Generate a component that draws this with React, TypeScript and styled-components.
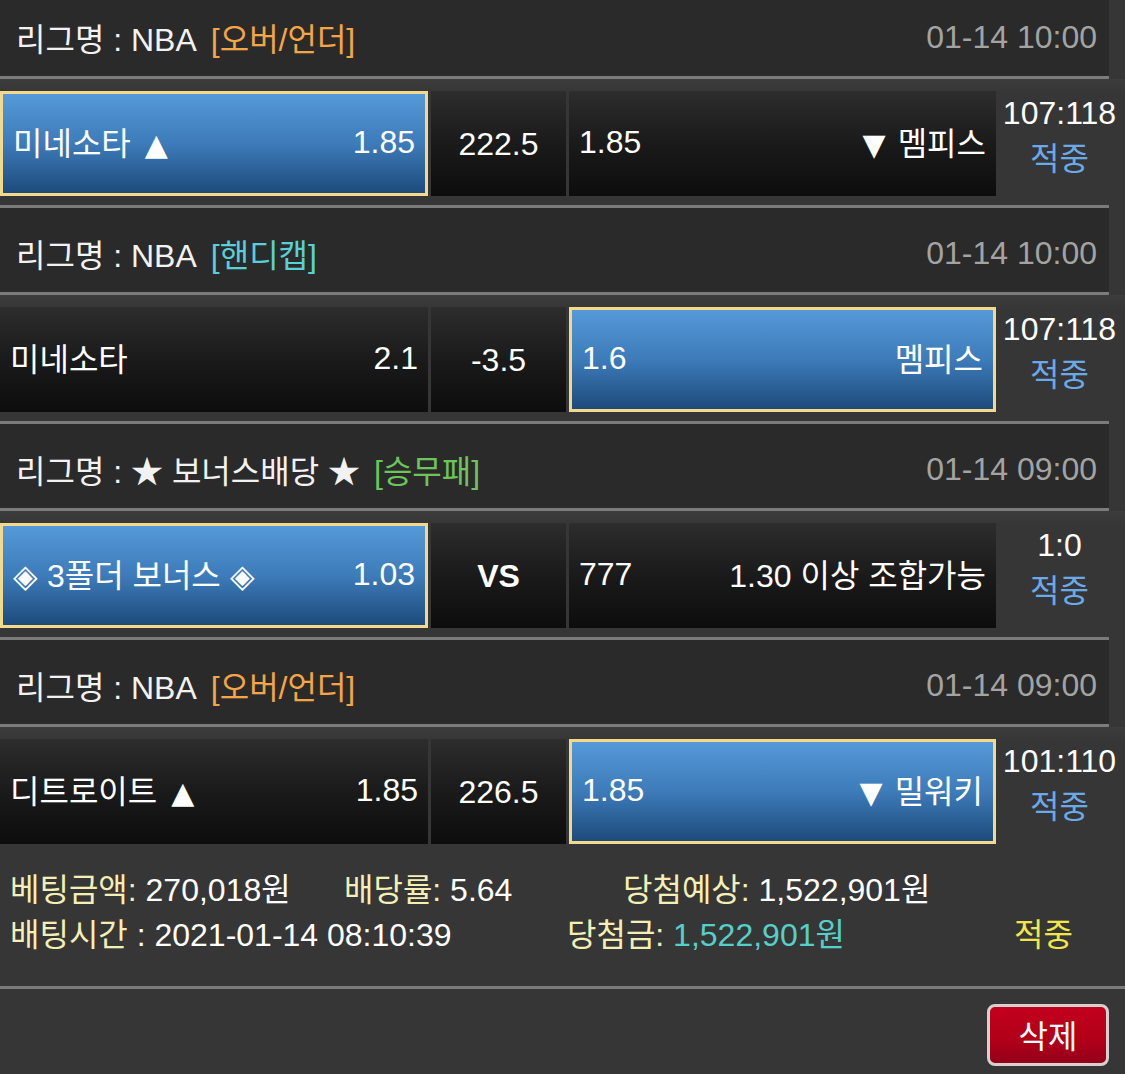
import React from 'react'
import styled, { createGlobalStyle } from 'styled-components'

const GlobalStyle = createGlobalStyle`
  body {
    margin: 0;
    background: #363636;
    font-family: "Liberation Sans", "Noto Sans CJK KR", sans-serif;
    color: #ffffff;
  }
`

const Page = styled.div`
  width: 1125px;
  height: 1074px;
  overflow: hidden;
  background: #363636;
`

const List = styled.div`
  margin-top: -8px;
`

const Header = styled.div`
  width: 1109px;
  height: 84px;
  box-sizing: border-box;
  padding: 6px 12px 0 16px;
  background: #2a2a2a;
  display: flex;
  align-items: center;
  justify-content: space-between;
  font-size: 32px;
  white-space: nowrap;
`

const League = styled.span`
  color: #f2f2f2;
`

const Market = styled.span<{ $color: string }>`
  color: ${p => p.$color};
  margin-left: 14px;
`

const Time = styled.span`
  color: #a3a3a3;
`

const Divider = styled.div<{ $full?: boolean }>`
  width: ${p => (p.$full ? '1125px' : '1109px')};
  height: 3px;
  background: #7b7b7b;
`

const Row = styled.div`
  display: grid;
  grid-template-columns: 428px 135px 427px 124px;
  column-gap: 3px;
  height: 126px;
  box-sizing: border-box;
  padding: 12px 0 9px;
  background: linear-gradient(#3c3c3c, #363636 14px);
`

const Cell = styled.div<{ $selected?: boolean }>`
  height: 105px;
  box-sizing: border-box;
  display: flex;
  align-items: center;
  justify-content: space-between;
  padding: 0 10px 6px;
  font-size: 32px;
  white-space: nowrap;
  color: #ffffff;
  background: ${p =>
    p.$selected
      ? 'linear-gradient(#5699d9, #3d7bb9 50%, #1d4b7c)'
      : 'linear-gradient(#2d2d2d, #1a1a1a 50%, #0d0d0d)'};
  border: ${p => (p.$selected ? '3px solid #f2d98c' : 'none')};
`

const Odds = styled.span`
  position: relative;
  top: 2px;
`

const Mark = styled.span<{ $side: 'left' | 'right' }>`
  font-family: "DejaVu Sans", sans-serif;
  font-size: 30px;
  margin: ${p => (p.$side === 'left' ? '0 0 0 14px' : '0 12px 0 0')};
`

const Line = styled.div<{ $bold?: boolean }>`
  height: 105px;
  display: flex;
  align-items: center;
  justify-content: center;
  padding-top: 2px;
  box-sizing: border-box;
  font-size: 32px;
  font-weight: ${p => (p.$bold ? 'bold' : 'normal')};
  background: linear-gradient(#2d2d2d, #1a1a1a 50%, #0d0d0d);
`

const Result = styled.div`
  display: flex;
  flex-direction: column;
  align-items: center;
  font-size: 32px;
  line-height: 44px;
  margin-left: -3px;
  white-space: nowrap;
`

const Hit = styled.span<{ $color: string }>`
  color: ${p => p.$color};
  padding-top: 2px;
`

const Summary = styled.div`
  padding: 15px 0 28px 10px;
  font-size: 32px;
`

const SummaryLine = styled.div`
  display: flex;
  height: 45px;
  line-height: 45px;
  white-space: nowrap;
`

const Item = styled.div<{ $w?: number }>`
  width: ${p => (p.$w ? `${p.$w}px` : 'auto')};
  flex-shrink: 0;
`

const Label = styled.span`
  color: #f4efb4;
`

const Value = styled.span<{ $color?: string }>`
  color: ${p => p.$color || '#ffffff'};
`

const ButtonBar = styled.div`
  display: flex;
  justify-content: flex-end;
  padding: 15px 16px 0;
`

const DeleteButton = styled.button`
  width: 122px;
  height: 62px;
  box-sizing: border-box;
  border: 3px solid #d8cfcf;
  border-radius: 8px;
  background: linear-gradient(#c2001d, #b10019 60%, #93001a);
  color: #ffffff;
  font-family: inherit;
  font-size: 32px;
  padding: 0 0 2px;
  cursor: pointer;
`

type Game = {
  league: string
  market: string
  marketColor: string
  time: string
  home: string
  homeMark?: string
  homeOdds: string
  line: string
  bold?: boolean
  awayOdds: string
  away: string
  awayMark?: string
  pick: 'home' | 'away'
  score: string
}

const games: Game[] = [
  {
    league: '리그명 : NBA',
    market: '[오버/언더]',
    marketColor: '#f4a546',
    time: '01-14 10:00',
    home: '미네소타',
    homeMark: '▲',
    homeOdds: '1.85',
    line: '222.5',
    awayOdds: '1.85',
    away: '멤피스',
    awayMark: '▼',
    pick: 'home',
    score: '107:118',
  },
  {
    league: '리그명 : NBA',
    market: '[핸디캡]',
    marketColor: '#58d0d6',
    time: '01-14 10:00',
    home: '미네소타',
    homeOdds: '2.1',
    line: '-3.5',
    awayOdds: '1.6',
    away: '멤피스',
    pick: 'away',
    score: '107:118',
  },
  {
    league: '리그명 : ★ 보너스배당 ★',
    market: '[승무패]',
    marketColor: '#6cc45a',
    time: '01-14 09:00',
    home: '◈ 3폴더 보너스 ◈',
    homeOdds: '1.03',
    line: 'VS',
    bold: true,
    awayOdds: '777',
    away: '1.30 이상 조합가능',
    pick: 'home',
    score: '1:0',
  },
  {
    league: '리그명 : NBA',
    market: '[오버/언더]',
    marketColor: '#f4a546',
    time: '01-14 09:00',
    home: '디트로이트',
    homeMark: '▲',
    homeOdds: '1.85',
    line: '226.5',
    awayOdds: '1.85',
    away: '밀워키',
    awayMark: '▼',
    pick: 'away',
    score: '101:110',
  },
]

const App = () => {
  return (
    <Page>
      <GlobalStyle />
      <List>
        {games.map((g, i) => (
          <div key={i}>
            <Header>
              <span>
                <League>{g.league}</League>
                <Market $color={g.marketColor}>{g.market}</Market>
              </span>
              <Time>{g.time}</Time>
            </Header>
            <Divider />
            <Row>
              <Cell $selected={g.pick === 'home'}>
                <span>
                  {g.home}
                  {g.homeMark && <Mark $side="left">{g.homeMark}</Mark>}
                </span>
                <Odds>{g.homeOdds}</Odds>
              </Cell>
              <Line $bold={g.bold}>{g.line}</Line>
              <Cell $selected={g.pick === 'away'}>
                <Odds>{g.awayOdds}</Odds>
                <span>
                  {g.awayMark && <Mark $side="right">{g.awayMark}</Mark>}
                  {g.away}
                </span>
              </Cell>
              <Result>
                <span>{g.score}</span>
                <Hit $color="#6aaae6">적중</Hit>
              </Result>
            </Row>
            {i < games.length - 1 && <Divider />}
          </div>
        ))}
      </List>
      <Summary>
        <SummaryLine>
          <Item $w={334}>
            <Label>베팅금액:</Label> <Value>270,018원</Value>
          </Item>
          <Item $w={279}>
            <Label>배당률:</Label> <Value>5.64</Value>
          </Item>
          <Item>
            <Label>당첨예상:</Label> <Value>1,522,901원</Value>
          </Item>
        </SummaryLine>
        <SummaryLine>
          <Item $w={557}>
            <Label>배팅시간</Label> <Value>: 2021-01-14 08:10:39</Value>
          </Item>
          <Item $w={447}>
            <Label>당첨금:</Label> <Value $color="#55d0c8">1,522,901원</Value>
          </Item>
          <Item>
            <Value $color="#f2e64a">적중</Value>
          </Item>
        </SummaryLine>
      </Summary>
      <Divider $full />
      <ButtonBar>
        <DeleteButton type="button">삭제</DeleteButton>
      </ButtonBar>
    </Page>
  )
}

export default App
